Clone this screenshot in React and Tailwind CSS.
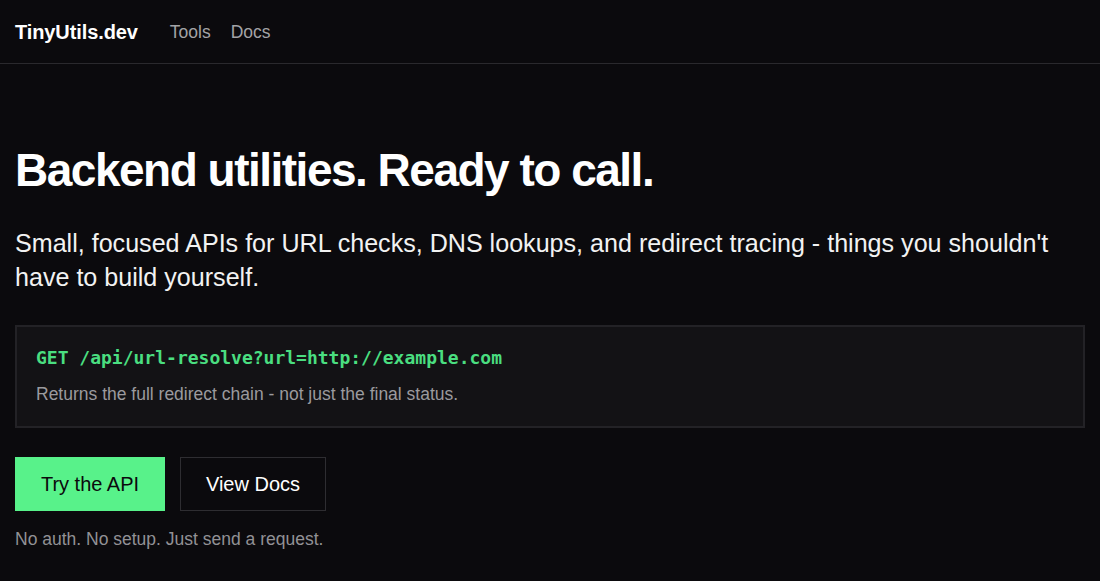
export default function App() {
  return (
    <div className="min-h-screen bg-[#0b0a0d] text-white font-['Liberation_Sans',Arial,sans-serif]">
      <nav className="h-[64px] flex items-center gap-[32px] px-[15px] border-b border-[#2a292d]">
        <span className="text-[20px] font-bold tracking-[-0.1px] pt-[1px]">TinyUtils.dev</span>
        <div className="flex items-center gap-[20px] text-[17.5px] text-[#a3a3a6] pt-[1px]">
          <a>Tools</a>
          <a>Docs</a>
        </div>
      </nav>

      <main className="px-[15px] pt-[78px]">
        <h1 className="text-[46px] leading-[56px] font-bold tracking-[-1.5px]">
          Backend utilities. Ready to call.
        </h1>
        <p className="mt-[28px] text-[25.1px] leading-[34px] text-[#f2f2f2]">
          Small, focused APIs for URL checks, DNS lookups, and redirect tracing - things you shouldn't have to build yourself.
        </p>

        <div className="mt-[31px] bg-[#131215] border-2 border-[#232226] px-[19px] pt-[18px] pb-[21px]">
          <div className="font-['DejaVu_Sans_Mono',monospace] text-[18px] leading-[26px] text-[#4ade80] font-semibold">
            GET /api/url-resolve?url=http://example.com
          </div>
          <div className="mt-[12px] text-[17.5px] leading-[22px] text-[#9b9a9e]">
            Returns the full redirect chain - not just the final status.
          </div>
        </div>

        <div className="mt-[29px] flex gap-[15px]">
          <button className="w-[150px] h-[54px] bg-[#58f28a] text-[#0b0a0d] text-[20px]">
            Try the API
          </button>
          <button className="w-[146px] h-[54px] border border-[#2e2d31] text-white text-[20px] font-medium">
            View Docs
          </button>
        </div>

        <p className="mt-[17px] text-[17.5px] leading-[22px] text-[#929195]">
          No auth. No setup. Just send a request.
        </p>
      </main>
    </div>
  );
}
